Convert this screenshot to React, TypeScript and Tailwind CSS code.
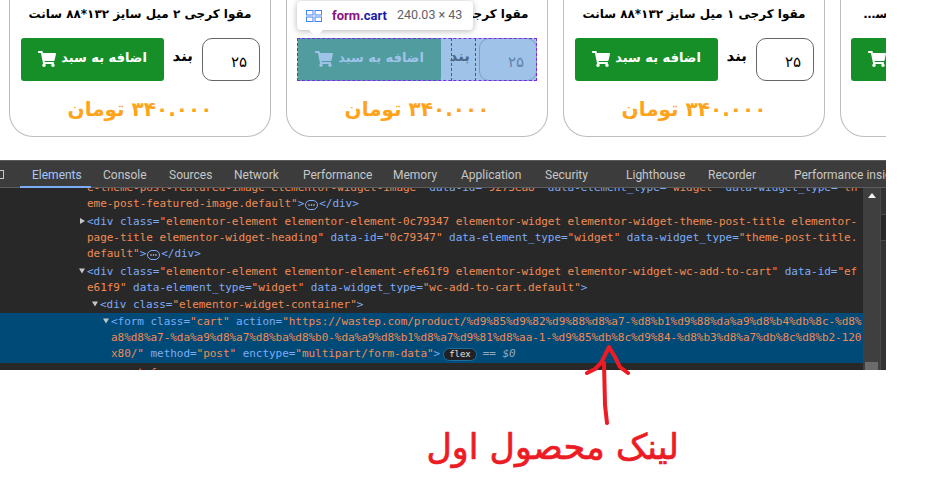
import { FaShoppingCart } from 'react-icons/fa'

const tabs = [
  { label: 'Elements', w: 'w-[71px]' },
  { label: 'Console', w: 'w-[66px]' },
  { label: 'Sources', w: 'w-[65px]' },
  { label: 'Network', w: 'w-[69px]' },
  { label: 'Performance', w: 'w-[90px]' },
  { label: 'Memory', w: 'w-[68px]' },
  { label: 'Application', w: 'w-[84px]' },
  { label: 'Security', w: 'w-[81px]' },
  { label: 'Lighthouse', w: 'w-[82px]' },
  { label: 'Recorder', w: 'w-[86px]' },
  { label: 'Performance insights', w: 'w-[130px]' },
]

function Tag({ children }: { children: React.ReactNode }) {
  return <span className="text-[#7cacf8]">{children}</span>
}

function Val({ children }: { children: React.ReactNode }) {
  return <span className="text-[#f28b54]">{children}</span>
}

function Dots() {
  return (
    <span className="inline-flex items-center justify-center w-[13px] h-[10px] mx-[1px] rounded-full border border-[#7cacf8] align-[1px] text-[#c4d7f5]">
      <svg width="7" height="2" viewBox="0 0 7 2" fill="currentColor">
        <circle cx="1" cy="1" r="0.8" />
        <circle cx="3.5" cy="1" r="0.8" />
        <circle cx="6" cy="1" r="0.8" />
      </svg>
    </span>
  )
}

function Caret({ open }: { open?: boolean }) {
  return (
    <svg width="8" height="8" viewBox="0 0 8 8" className="absolute -left-[9px] top-[3px]" fill="#c4c7c5">
      {open ? <path d="M1 1.5h6L4 6.5z" /> : <path d="M2 1l5 3-5 3z" />}
    </svg>
  )
}

function CartButton({ highlight }: { highlight?: boolean }) {
  return (
    <div className={`w-[143px] h-[43px] rounded-[3px] flex items-center justify-center gap-[5px] text-[13px] font-bold ${highlight ? 'bg-[#509c9f] text-[#9fc3e8]' : 'bg-[#178f29] text-white'}`}>
      <span className="-mt-[4px]">اضافه به سبد</span>
      <FaShoppingCart className="w-[18px] h-[16px] -mt-[2px]" />
    </div>
  )
}

function Card({ size, highlight }: { size: string; highlight?: boolean }) {
  return (
    <div dir="rtl" className="relative shrink-0 w-[262px] h-[137px] border border-t-0 border-[#bdbdbd] rounded-b-[24px] bg-white">
      <div className="h-[38px] pt-[3px] text-center text-[12px] font-bold leading-[22px] text-black whitespace-nowrap">
        مقوا کرجی {size} میل سایز ۱۳۲*۸۸ سانت
      </div>
      <div className={`mr-[10px] w-[240px] h-[43px] flex ${highlight ? 'bg-[#9fc3e8] outline outline-1 -outline-offset-1 outline-dashed outline-[#7c2ae8]' : ''}`}>
        <div className={`w-[58px] h-[43px] rounded-[10px] border pr-[12px] flex items-center text-[15px] pt-[5px] ${highlight ? 'border-[#7f9cc0] text-[#5f82ad]' : 'border-[#666] bg-white text-black'}`}>
          ۲۵
        </div>
        <div className={`ml-[10px] mr-[3px] w-[25px] h-[43px] flex items-start justify-start pr-[5px] pt-[7px] text-[15px] font-bold whitespace-nowrap border-x border-dashed ${highlight ? 'border-[#7c2ae8] text-[#4d6a8a]' : 'border-transparent text-black'}`}>
          بند
        </div>
        <CartButton highlight={highlight} />
      </div>
      <div className="mt-[12px] text-center text-[20px] font-bold leading-[32px] text-[#ffa31a] tracking-[1px]">
        ۳۴۰.۰۰۰ تومان
      </div>
    </div>
  )
}

function PartialCard() {
  return (
    <div dir="rtl" className="shrink-0 w-[262px] h-[137px] border border-t-0 border-[#bdbdbd] rounded-b-[24px] bg-white">
      <div className="h-[38px] pt-[3px] ml-[19px] mr-[24px] overflow-hidden text-ellipsis text-[12px] font-bold leading-[22px] text-black whitespace-nowrap">
        مقوا کرجی ۳ میل سایز ۱۳۲*۸۸ سانت کاغذ کرافت روکش شده
      </div>
      <div className="mr-[10px] w-[240px] h-[43px] flex justify-end">
        <CartButton />
      </div>
    </div>
  )
}

function ElementsTree() {
  return (
    <div className="relative -mt-[8px] font-['DejaVu_Sans_Mono',monospace] text-[11px] tracking-[-0.04px] leading-[16px] whitespace-pre">
      <div className="pl-[87px]">
        <div><Val>e-theme-post-featured-image elementor-widget-image"</Val> <Tag>data-id=</Tag><Val>"9273ea8"</Val> <Tag>data-element_type=</Tag><Val>"widget"</Val> <Tag>data-widget_type=</Tag><Val>"th</Val></div>
        <div><Val>eme-post-featured-image.default"</Val><Tag>&gt;</Tag><Dots /><Tag>&lt;/div&gt;</Tag></div>
      </div>
      <div className="pl-[87px] mt-[2px]">
        <div className="relative"><Caret /><Tag>&lt;div class=</Tag><Val>"elementor-element elementor-element-0c79347 elementor-widget elementor-widget-theme-post-title elementor-</Val></div>
        <div><Val>page-title elementor-widget-heading"</Val> <Tag>data-id=</Tag><Val>"0c79347"</Val> <Tag>data-element_type=</Tag><Val>"widget"</Val> <Tag>data-widget_type=</Tag><Val>"theme-post-title.</Val></div>
        <div><Val>default"</Val><Tag>&gt;</Tag><Dots /><Tag>&lt;/div&gt;</Tag></div>
      </div>
      <div className="pl-[87px] mt-[2px]">
        <div className="relative"><Caret open /><Tag>&lt;div class=</Tag><Val>"elementor-element elementor-element-efe61f9 elementor-widget elementor-widget-wc-add-to-cart"</Val> <Tag>data-id=</Tag><Val>"ef</Val></div>
        <div><Val>e61f9"</Val> <Tag>data-element_type=</Tag><Val>"widget"</Val> <Tag>data-widget_type=</Tag><Val>"wc-add-to-cart.default"</Val><Tag>&gt;</Tag></div>
      </div>
      <div className="pl-[100px] mt-[1px]">
        <div className="relative"><Caret open /><Tag>&lt;div class=</Tag><Val>"elementor-widget-container"</Val><Tag>&gt;</Tag></div>
      </div>
      <div className="pl-[111px] py-[1px] bg-[#004a77]">
        <div className="relative"><Caret open /><Tag>&lt;form class=</Tag><Val>"cart"</Val> <Tag>action=</Tag><Val>"https://wastep.com/product/%d9%85%d9%82%d9%88%d8%a7-%d8%b1%d9%88%da%a9%d8%b4%db%8c-%d8%</Val></div>
        <div><Val>a8%d8%a7-%da%a9%d8%a7%d8%ba%d8%b0-%da%a9%d8%b1%d8%a7%d9%81%d8%aa-1-%d9%85%db%8c%d9%84-%d8%b3%d8%a7%db%8c%d8%b2-120</Val></div>
        <div className="flex items-center">
          <Val>x80/"</Val> <Tag>&nbsp;method=</Tag><Val>"post"</Val> <Tag>&nbsp;enctype=</Tag><Val>"multipart/form-data"</Val><Tag>&gt;</Tag>
          <span className="ml-[3px] px-[5px] h-[13px] rounded-full bg-[#202124] border border-[#1a6fa0] text-[#e3e3e3] text-[9px] leading-[11px]">flex</span>
          <span className="ml-[6px] italic text-[#8ea9bd]">== $0</span>
        </div>
      </div>
      <div className="pl-[124px] mt-[2px]"><Val>  t f</Val></div>
    </div>
  )
}

export default function App() {
  return (
    <div className="relative w-[940px] h-[489px] overflow-hidden bg-white font-['DejaVu_Sans',sans-serif]">
      {/* Product row */}
      <div className="relative w-[886px] h-[160px] overflow-hidden flex gap-[15px] pl-[9px]">
        <Card size="۲" />
        <Card size="۳" highlight />
        <Card size="۱" />
        <PartialCard />
        {/* Inspect tooltip */}
        <div className="absolute left-[297px] top-[1px] w-[176px] h-[29px] rounded-[4px] bg-white shadow-[0_1px_6px_rgba(0,0,0,0.3)] flex items-center pl-[9px] font-['Roboto',sans-serif] text-[12.5px]">
          <svg width="16" height="12" viewBox="0 0 16 12" fill="none" stroke="#4285f4" strokeWidth="1" className="mr-[10px]">
            <rect x="0.5" y="0.5" width="6.5" height="4.5" />
            <rect x="9" y="0.5" width="6.5" height="4.5" />
            <rect x="0.5" y="7" width="6.5" height="4.5" />
            <rect x="9" y="7" width="6.5" height="4.5" />
          </svg>
          <span className="font-bold text-[13px] text-[#881280]">form</span>
          <span className="font-bold text-[13px] text-[#1a1aa6]">.cart</span>
          <span className="ml-[10px] text-[#5f6368]">240.03 × 43</span>
          <div className="absolute left-[12px] -bottom-[7px] w-0 h-0 border-x-[7px] border-x-transparent border-t-[7px] border-t-white" />
        </div>
      </div>

      {/* DevTools */}
      <div className="w-[886px] h-[210px] flex flex-col overflow-hidden bg-[#282828] font-['Roboto',sans-serif]">
        <div className="relative z-10 h-[28px] shrink-0 flex bg-[#3c3c3c] border-t border-t-[#5a5a5a] border-b border-b-[#5e5e5e] text-[12px] text-[#c7c7c7]">
          <div className="w-[14px] shrink-0 flex items-center">
            <div className="w-[4px] h-[9px] border border-l-0 border-[#c7c7c7]" />
          </div>
          <div className="my-[6px] w-px bg-[#5e5e5e]" />
          <div className="w-[6px] shrink-0" />
          {tabs.map((t, i) => (
            <div
              key={t.label}
              className={`${t.w} shrink-0 pl-[12px] leading-[28px] whitespace-nowrap ${i === 0 ? 'text-[#a8c7fa] border-b-2 border-[#7cacf8] h-[27px]' : ''}`}
            >
              {t.label}
            </div>
          ))}
        </div>
        <div className="flex-1 flex min-h-0">
          <div className="w-[863px] overflow-hidden">
            <ElementsTree />
          </div>
          <div className="w-[17px] flex flex-col items-center justify-between bg-[#3f3f3f]">
            <svg width="8" height="5" viewBox="0 0 8 5" className="mt-[5px]" fill="#f1f1f1">
              <path d="M4 0l4 5H0z" />
            </svg>
            <div className="w-[13px] h-[8px] bg-[#6b6b6b]" />
          </div>
          <div className="w-[6px] border-l border-[#4a4a4a] bg-[#333333] flex flex-col">
            <div className="h-[27px] border-b border-[#4a4a4a]" />
            <div className="h-[26px] border-b border-[#4a4a4a] bg-[#282828]" />
          </div>
        </div>
      </div>

      {/* Annotation */}
      <svg width="60" height="80" viewBox="0 0 60 80" fill="none" stroke="#ed1c24" strokeWidth="4" strokeLinecap="round" strokeLinejoin="round" className="absolute left-[580px] top-[345px]">
        <path d="M24 18l1 42 2 18" />
        <path d="M7 28l8-4 6-6 8-16 6 10 5 10 8 6" />
      </svg>
      <div dir="rtl" className="absolute left-[427px] top-[421px] w-[252px] text-[35px] leading-[52px] [-webkit-text-stroke:0.7px_#ed1c24] text-[#ed1c24] whitespace-nowrap">
        لینک محصول اول
      </div>
    </div>
  )
}
